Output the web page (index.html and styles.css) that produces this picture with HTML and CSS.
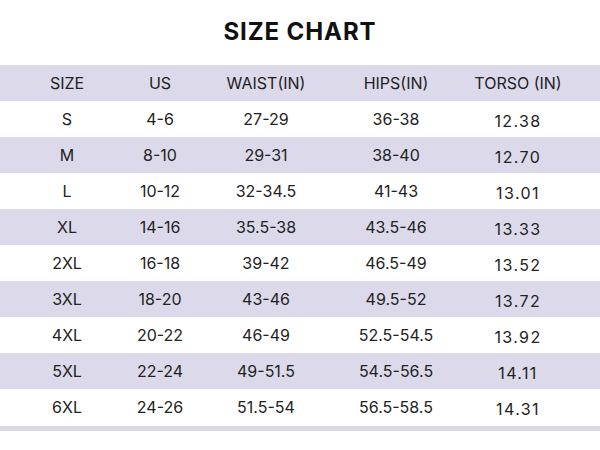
FILE: index.html
```html
<!DOCTYPE html>
<html>
<head>
<meta charset="utf-8">
<link rel="stylesheet" href="styles.css">
</head>
<body>
<div class="page">
  <h1 class="title">SIZE CHART</h1>
  <div class="table">
    <div class="row head"><span>SIZE</span><span>US</span><span>WAIST(IN)</span><span>HIPS(IN)</span><span>TORSO (IN)</span></div>
    <div class="row"><span>S</span><span>4-6</span><span>27-29</span><span>36-38</span><span class="t">12.38</span></div>
    <div class="row alt"><span>M</span><span>8-10</span><span>29-31</span><span>38-40</span><span class="t">12.70</span></div>
    <div class="row"><span>L</span><span>10-12</span><span>32-34.5</span><span>41-43</span><span class="t">13.01</span></div>
    <div class="row alt"><span>XL</span><span>14-16</span><span>35.5-38</span><span>43.5-46</span><span class="t">13.33</span></div>
    <div class="row"><span>2XL</span><span>16-18</span><span>39-42</span><span>46.5-49</span><span class="t">13.52</span></div>
    <div class="row alt"><span>3XL</span><span>18-20</span><span>43-46</span><span>49.5-52</span><span class="t">13.72</span></div>
    <div class="row"><span>4XL</span><span>20-22</span><span>46-49</span><span>52.5-54.5</span><span class="t">13.92</span></div>
    <div class="row alt"><span>5XL</span><span>22-24</span><span>49-51.5</span><span>54.5-56.5</span><span class="t">14.11</span></div>
    <div class="row"><span>6XL</span><span>24-26</span><span>51.5-54</span><span>56.5-58.5</span><span class="t">14.31</span></div>
    <div class="foot"></div>
  </div>
</div>
</body>
</html>
```
FILE: styles.css
```css
* { box-sizing: border-box; }
html, body { margin: 0; padding: 0; background: #fff; }
body {
  font-family: Inter, "Noto Sans", sans-serif;
  color: #222;
  width: 600px;
  height: 450px;
  overflow: hidden;
}
.title {
  margin: 0;
  height: 65px;
  display: flex;
  align-items: center;
  justify-content: center;
  font-size: 24px;
  font-weight: 700;
  letter-spacing: 0.9px;
  color: #111;
  padding-bottom: 2px;
}
.row {
  display: grid;
  grid-template-columns: 94px 92px 120px 140px 104px;
  padding-left: 20px;
  height: 36px;
  align-items: center;
  font-size: 16px;
}
.row span { text-align: center; }
.head, .alt { background: #dcdaea; }
.t { letter-spacing: 1.4px; padding-top: 3px; }
.foot {
  margin-top: 1px;
  height: 5px;
  background: #d9d8e4;
}
```
